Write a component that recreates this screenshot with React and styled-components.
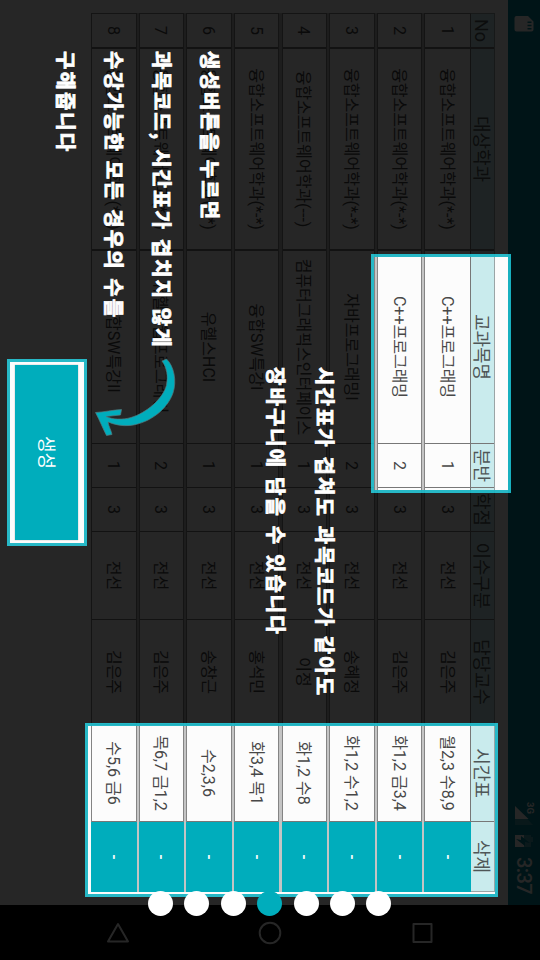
import React from "react";
import styled, { createGlobalStyle, css } from "styled-components";

const Global = createGlobalStyle`
  html, body { margin: 0; background: #000; }
  * { box-sizing: border-box; }
`;

const TEAL = "#00adbc";

const Device = styled.main`
  position: relative;
  width: 540px;
  height: 960px;
  overflow: hidden;
  background: #000;
`;

/* The app runs in landscape; the device is held upright. */
const Landscape = styled.div`
  position: absolute;
  top: 0;
  left: 0;
  width: 960px;
  height: 540px;
  display: flex;
  transform-origin: 0 0;
  transform: translateX(540px) rotate(90deg);
  font-family: Roboto, "Noto Sans CJK KR", sans-serif;
`;

const AppArea = styled.div`
  width: 905px;
  height: 540px;
  background: #fcfcfc;
`;

const StatusBar = styled.header`
  height: 32px;
  padding: 0 11px 0 16px;
  display: flex;
  align-items: center;
  background: #008497;
  color: #fff;
`;

const Clock = styled.span`
  font-size: 20px;
  font-weight: 500;
  line-height: 34px;
  margin-left: 0;
  width: 37px;
  white-space: nowrap;
  letter-spacing: -0.6px;
`;

const StatusIcons = styled.svg`
  margin-left: auto;
`;

const Table = styled.section`
  width: 879px;
  margin: 13px 0 0 13px;
  display: flex;
  flex-direction: column;
`;

const columns = css`
  display: grid;
  grid-template-columns: 35px 202px 193px 44px 44px 88px 105px 97px 69px;
`;

const HeadRow = styled.div`
  ${columns}
  height: 25px;
  background: #c9ebed;
  border: 1px solid #9aa5a6;
  border-bottom-color: #777;
  color: #4f5657;
  font-size: 18px;
`;

const Rows = styled.div`
  display: grid;
  grid-template-rows: repeat(8, 45.5px);
  row-gap: 2.15px;
  background: #c4c4c4;
`;

const Row = styled.div`
  ${columns}
  background: #fcfcfc;
  border: 1px solid #848484;
  border-top-width: ${(p) => (p.$first ? 0 : 1)}px;
  color: #484848;
  font-size: 16px;
`;

const Cell = styled.div`
  display: flex;
  align-items: center;
  justify-content: center;
  min-width: 0;
  white-space: nowrap;
  line-height: 1;
  padding-top: 2px;
  border-right: ${(p) => (p.$plain ? "0" : `${p.$heavy ? 2 : 1}px solid #777`)};
`;

const HeadCell = styled(Cell)`
  padding-top: 2px;
`;

const DeleteCell = styled(Cell)`
  margin: -1px -1px -1px 0;
  padding-top: 0;
  background: ${TEAL};
  color: #fff;
  font-weight: 700;
  font-size: 14px;
  border-right: 0;
`;

const Navigation = styled.nav`
  width: 55px;
  height: 540px;
  background: #000;
  display: flex;
  flex-direction: column;
  align-items: center;
  padding-top: 106px;
  gap: 128px;
`;

const NavIcon = styled.svg`
  display: block;
  width: 24px;
  height: 24px;
  fill: none;
  stroke: #fff;
  stroke-width: 2;
  stroke-linejoin: round;
`;

const ButtonHolder = styled.div`
  position: absolute;
  left: 362px;
  top: 456px;
  width: 181px;
  height: 74px;
  padding: 6px 3px 5px 3px;
  background: #fcfcfc;
`;

const CreateButton = styled.button`
  display: block;
  width: 175px;
  height: 63px;
  padding: 0;
  border: 0;
  background: ${TEAL};
  color: #fff;
  font: 400 18px/64px Roboto, "Noto Sans CJK KR", sans-serif;
  box-shadow: 0 0 1px #999;
`;

const Dim = styled.div`
  position: absolute;
  inset: 0;
  background: rgba(0, 0, 0, 0.85);
  clip-path: path(
    evenodd,
    "M0 0H960V540H0Z M254 29H493V169H254Z M723 42H897V455H723Z M359 453H546V533H359Z"
  );
`;

const Spotlight = styled.div`
  position: absolute;
  left: ${(p) => p.$x}px;
  top: ${(p) => p.$y}px;
  width: ${(p) => p.$w}px;
  height: ${(p) => p.$h}px;
  border: 3px solid rgba(25, 180, 194, 0.94);
`;

const Note = styled.div`
  position: absolute;
  left: ${(p) => p.$x}px;
  top: ${(p) => p.$y}px;
  display: flex;
  flex-direction: column;
  color: #fff;
  font-family: "Noto Sans CJK KR", sans-serif;
  font-weight: 700;
  font-size: 20px;
  -webkit-text-stroke: 0.8px #fff;
  stroke-linejoin: round;
`;

const NoteLine = styled.span`
  height: ${(p) => p.$h || 48}px;
  line-height: 48px;
  white-space: pre;
  letter-spacing: 2.05px;
  word-spacing: ${(p) => p.$space ?? 1.2}px;
`;

const Arrow = styled.svg`
  position: absolute;
  left: 90px;
  top: 352px;
`;

const Pager = styled.div`
  position: absolute;
  left: 148px;
  top: 891px;
  display: flex;
  gap: 11.4px;
`;

const Dot = styled.i`
  width: 25px;
  height: 25px;
  border-radius: 50%;
  background: ${(p) => (p.$active ? TEAL : "#fff")};
`;

const heads = ["No", "대상학과", "교과목명", "분반", "학점", "이수구분", "담당교수", "시간표", "삭제"];
const dept = "융합소프트웨어학과(*-*)";
const rows = [
  ["1", dept, "C++프로그래밍", "1", "3", "전선", "김은주", "월2,3 수8,9"],
  ["2", dept, "C++프로그래밍", "2", "3", "전선", "김은주", "화1,2 금3,4"],
  ["3", dept, "자바프로그래밍I", "2", "3", "전선", "송혜정", "화1,2 수1,2"],
  ["4", "융합소프트웨어학과(---)", "컴퓨터그래픽스인터페이스", "1", "3", "전선", "이정", "화1,2 수8"],
  ["5", dept, "융합SW특강I", "1", "3", "전선", "홍석민", "화3,4 목1"],
  ["6", dept, "유헬스HCI", "1", "3", "전선", "송창근", "수2,3,6"],
  ["7", dept, "유헬스웹프로그래밍", "2", "3", "전선", "김은주", "목6,7 금1,2"],
  ["8", dept, "융합SW특강II", "1", "3", "전선", "김은주", "수5,6 금6"],
];

export default function App() {
  return (
    <>
      <Global />
      <Device>
        <Landscape>
          <AppArea>
            <StatusBar>
              <svg width="16" height="20" viewBox="0 0 16 20">
                <path
                  fill="#fff"
                  fillRule="evenodd"
                  d="M5.5 0.5H13.5Q15.5 .5 15.5 2.5V17.5Q15.5 19.5 13.5 19.5H2Q0 19.5 0 17.5V6ZM5.5 2.5V6.5H7V2.5ZM8.7 2.5V6.5H10.2V2.5ZM11.9 2.5V6.5H13.4V2.5Z"
                />
              </svg>
              <StatusIcons width="57" height="32" viewBox="-1 0 57 32">
                <text x="1" y="13.5" fontSize="9.5" fontWeight="700" fill="#fff" fontFamily="Roboto">3G</text>
                <path d="M15 15.500L24 7V25H18V12.500Z" fill="#fff" opacity=".25" />
                <path d="M5 25H18V11.500Z" fill="#fff" />
                <path d="M36 7h5v2h5v16H34V9h2z" fill="#fff" opacity=".3" />
                <path d="M34 16h12v9H34z" fill="#fff" />
                <path d="M42 10L35 19h4l-1 5 7-9h-4z" fill="#008497" />
              </StatusIcons>
              <Clock>3:37</Clock>
            </StatusBar>
            <Table>
              <HeadRow>
                {heads.map((h, i) => (
                  <HeadCell key={h} $plain={i === 8} $heavy={i < 2}>{h}</HeadCell>
                ))}
              </HeadRow>
              <Rows>
                {rows.map((r, n) => (
                  <Row key={r[0]} $first={n === 0}>
                    {r.map((t, i) => (
                      <Cell key={i} $heavy={i < 2}>{t}</Cell>
                    ))}
                    <DeleteCell>-</DeleteCell>
                  </Row>
                ))}
              </Rows>
            </Table>
          </AppArea>
          <Navigation>
            <NavIcon viewBox="0 0 24 24"><rect x="3" y="2.500" width="18" height="18" /></NavIcon>
            <NavIcon viewBox="0 0 24 24"><circle cx="12" cy="12" r="10.3" /></NavIcon>
            <NavIcon viewBox="0 0 24 24"><path d="M3 12L20.500 2V22Z" /></NavIcon>
          </Navigation>
          <ButtonHolder><CreateButton>생성</CreateButton></ButtonHolder>
          <Dim />
          <Spotlight $x={254} $y={29} $w={239} $h={140} />
          <Spotlight $x={723} $y={42} $w={174} $h={413} />
          <Spotlight $x={359} $y={453} $w={187} $h={80} />
          <Note $x={51} $y={306}>
            <NoteLine $space={0}>생성버튼을 누르면</NoteLine>
            <NoteLine>과목코드, 시간표가 겹치지 않게</NoteLine>
            <NoteLine $space={1}>수강가능한 모든 경우의 수를</NoteLine>
            <NoteLine>구해줍니다</NoteLine>
          </Note>
          <Note $x={367} $y={191}>
            <NoteLine $h={49}>시간표가 겹쳐도 과목코드가 같아도</NoteLine>
            <NoteLine>장바구니에 담을 수 있습니다</NoteLine>
          </Note>
        </Landscape>
        <Arrow width="90" height="90" viewBox="90 352 90 90">
          <path
            d="M162 361L166.500 359C174 366 177 381 173 393C168 408 151 423 130 425.500C122 426.300 114 424.500 108 422C109 427 111 430 112 434.500L106.500 435.500C103 429 100 421 95.500 412.500C104 412 113 410 121.500 409.500L120.500 415L106 416.500C112 419.500 123 420 131 417.500C146 413 163 399 166.500 385C168 376 167 368 162 361Z"
            fill={TEAL}
            stroke="#56797c"
            strokeWidth=".7"
            strokeLinejoin="round"
          />
        </Arrow>
        <Pager>
          {[0, 1, 2, 3, 4, 5, 6].map((i) => (
            <Dot key={i} $active={i === 3} />
          ))}
        </Pager>
      </Device>
    </>
  );
}
